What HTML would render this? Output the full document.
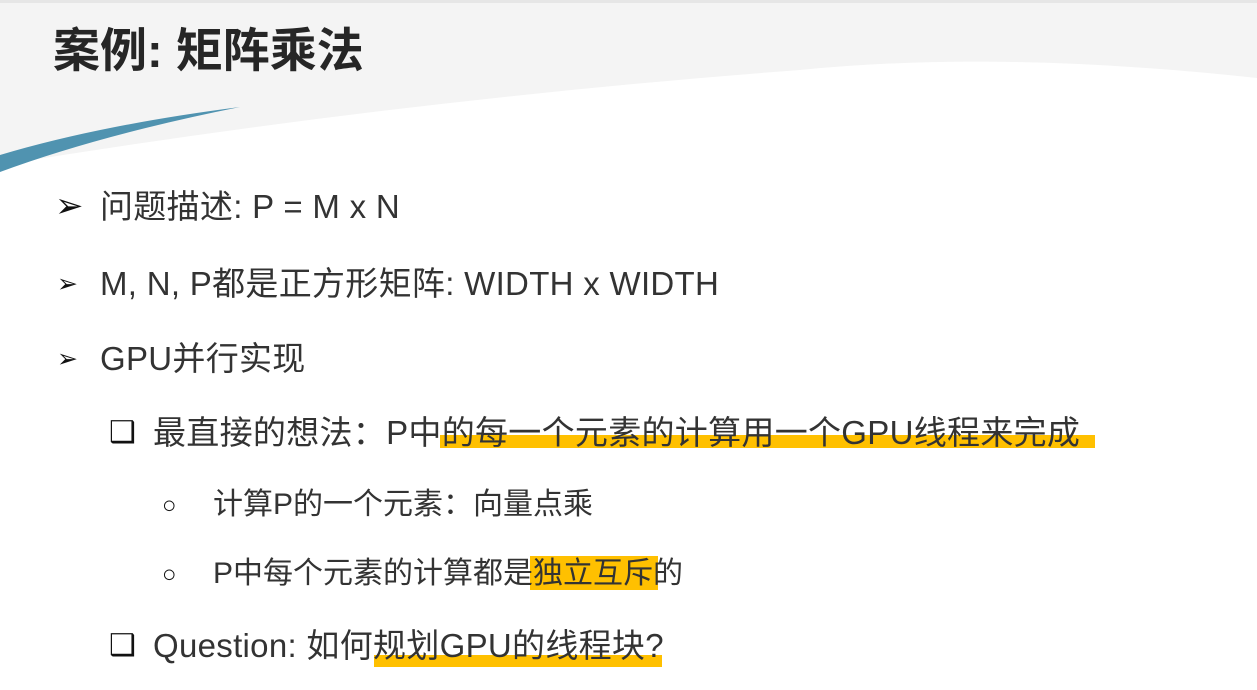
<!DOCTYPE html>
<html><head><meta charset="utf-8"><style>
body{margin:0;width:1257px;height:690px;overflow:hidden;background:#fff;position:relative;font-family:"Liberation Sans","Noto Sans CJK SC",sans-serif;color:#333}
.t{position:absolute;white-space:nowrap;font-size:33px;line-height:36px;letter-spacing:0.3px}
.b{position:absolute;white-space:nowrap;color:#111;line-height:36px}
.h{position:absolute;background:#ffc000}
</style></head><body>
<svg width="1257" height="690" style="position:absolute;left:0;top:0">
<rect x="0" y="0" width="1257" height="690" fill="#fff"/>
<path d="M0 0 H1257 V78 Q1000 50 800 70 Q400 100 0 165 Z" fill="#f4f4f4"/>
<rect x="0" y="0" width="1257" height="3" fill="#e6e6e6"/>
<path d="M0 155 Q100 125 240 107 Q100 135 0 172 Z" fill="#5093b0"/>
</svg>
<div style="position:absolute;left:53px;top:12px;font-size:47px;font-weight:bold;color:#262626;white-space:nowrap">案例: 矩阵乘法</div>
<div class="h" style="left:440px;top:435px;width:655px;height:13px"></div>
<div class="h" style="left:530px;top:556px;width:128px;height:34px"></div>
<div class="h" style="left:374px;top:655px;width:288px;height:12px"></div>
<div class="b" style="left:55px;top:188px;font-size:34px">➢</div>
<div class="t" style="left:100px;top:189px">问题描述: P = M x N</div>
<div class="b" style="left:57px;top:266px;font-size:25px">➢</div>
<div class="t" style="left:100px;top:266px">M, N, P都是正方形矩阵: WIDTH x WIDTH</div>
<div class="b" style="left:57px;top:341px;font-size:25px">➢</div>
<div class="t" style="left:100px;top:341px">GPU并行实现</div>
<div class="b" style="left:109px;top:415px;font-size:30px">❑</div>
<div class="t" style="left:153px;top:415px">最直接的想法：P中的每一个元素的计算用一个GPU线程来完成</div>
<div class="b" style="left:162px;top:488px;font-size:24px">○</div>
<div class="t" style="left:213px;top:487px;font-size:30px;letter-spacing:0">计算P的一个元素：向量点乘</div>
<div class="b" style="left:162px;top:557px;font-size:24px">○</div>
<div class="t" style="left:213px;top:556px;font-size:30px;letter-spacing:0">P中每个元素的计算都是独立互斥的</div>
<div class="b" style="left:109px;top:628px;font-size:30px">❑</div>
<div class="t" style="left:153px;top:628px">Question: 如何规划GPU的线程块?</div>
</body></html>
